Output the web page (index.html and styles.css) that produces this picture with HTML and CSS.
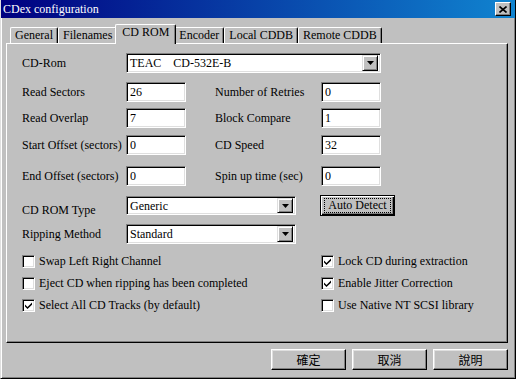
FILE: index.html
```html
<!DOCTYPE html>
<html lang="en">
<head>
    <meta charset="UTF-8">
    <title>CDex configuration</title>
    <link rel="stylesheet" href="styles.css">
</head>
<body>
<div class="window">
    <div class="titlebar">
        <span class="title">CDex configuration</span>
        <span class="close">
            <svg width="8" height="7" viewBox="0 0 8 7"><path d="M0.5 0.5 L7.5 6.5 M7.5 0.5 L0.5 6.5" stroke="#000" stroke-width="1.6"/></svg>
        </span>
    </div>

    <div class="content">
        <!-- tab strip -->
        <div class="tabs">
            <div class="tab">General</div>
            <div class="tab">Filenames</div>
            <div class="tab active">CD ROM</div>
            <div class="tab">Encoder</div>
            <div class="tab">Local CDDB</div>
            <div class="tab">Remote CDDB</div>
        </div>

        <div class="panel">
            <div class="form">
                <div class="label">CD-Rom</div>
                <div class="combo wide">
                    <span class="value">TEAC&nbsp;&nbsp;&nbsp;&nbsp;CD-532E-B</span>
                    <span class="arrow"><svg width="7" height="4" viewBox="0 0 7 4"><path d="M0 0 H7 L3.5 4Z" fill="#000"/></svg></span>
                </div>

                <div class="label">Read Sectors</div>
                <div class="field">26</div>
                <div></div>
                <div class="label">Number of Retries</div>
                <div class="field">0</div>

                <div class="label">Read Overlap</div>
                <div class="field">7</div>
                <div></div>
                <div class="label">Block Compare</div>
                <div class="field">1</div>

                <div class="label">Start Offset (sectors)</div>
                <div class="field">0</div>
                <div></div>
                <div class="label">CD Speed</div>
                <div class="field">32</div>

                <div class="label">End Offset (sectors)</div>
                <div class="field">0</div>
                <div></div>
                <div class="label">Spin up time (sec)</div>
                <div class="field">0</div>
            </div>

            <div class="types">
                <div class="label low">CD ROM Type</div>
                <div class="combo short">
                    <span class="value">Generic</span>
                    <span class="arrow"><svg width="7" height="4" viewBox="0 0 7 4"><path d="M0 0 H7 L3.5 4Z" fill="#000"/></svg></span>
                </div>
                <div></div>
                <div class="btn default"><span class="focus">Auto Detect</span></div>

                <div class="label">Ripping Method</div>
                <div class="combo">
                    <span class="value">Standard</span>
                    <span class="arrow"><svg width="7" height="4" viewBox="0 0 7 4"><path d="M0 0 H7 L3.5 4Z" fill="#000"/></svg></span>
                </div>
            </div>

            <div class="checks">
                <label class="check"><span class="box"></span>Swap Left Right Channel</label>
                <label class="check"><span class="box"></span>Eject CD when ripping has been completed</label>
                <label class="check"><span class="box on"><svg width="7" height="7" viewBox="0 0 7 7"><path d="M0 2.5 L2.5 5 L7 0.5 V2.8 L2.5 7 L0 4.5Z" fill="#000"/></svg></span>Select All CD Tracks (by default)</label>
                <label class="check"><span class="box on"><svg width="7" height="7" viewBox="0 0 7 7"><path d="M0 2.5 L2.5 5 L7 0.5 V2.8 L2.5 7 L0 4.5Z" fill="#000"/></svg></span>Lock CD during extraction</label>
                <label class="check"><span class="box on"><svg width="7" height="7" viewBox="0 0 7 7"><path d="M0 2.5 L2.5 5 L7 0.5 V2.8 L2.5 7 L0 4.5Z" fill="#000"/></svg></span>Enable Jitter Correction</label>
                <label class="check"><span class="box"></span>Use Native NT SCSI library</label>
            </div>
        </div>

        <!-- dialog buttons -->
        <div class="footer">
            <div class="btn cjk">確定</div>
            <div class="btn cjk">取消</div>
            <div class="btn cjk">說明</div>
        </div>
    </div>
</div>
</body>
</html>
```

FILE: styles.css
```css
body {
    margin: 0;
    background: #c0c0c0;
    font-family: "Liberation Serif", serif;
    font-size: 12px;
    color: #000;
}

.window {
    width: 516px;
    height: 379px;
    box-sizing: border-box;
    background: #c0c0c0;
    border-left: 1px solid #dfdfdf;
    border-right: 1px solid #000;
    border-bottom: 1px solid #000;
    box-shadow: inset 1px 0 #fff, inset -1px -1px #808080;
}

/* title bar */
.titlebar {
    height: 18px;
    display: flex;
    align-items: center;
    justify-content: space-between;
    padding: 0 4px 0 2px;
    background: linear-gradient(to right, #000080, #1084d0);
    color: #fff;
}

.close {
    width: 16px;
    height: 14px;
    box-sizing: border-box;
    display: flex;
    align-items: center;
    justify-content: center;
    background: #c0c0c0;
    border: 1px solid;
    border-color: #fff #000 #000 #fff;
    box-shadow: inset -1px -1px #808080;
}

.content {
    padding: 6px 7px 0 5px;
}

/* tabs */
.tabs {
    display: flex;
    align-items: flex-end;
    height: 19px;
    padding-left: 4px;
    position: relative;
    z-index: 1;
}

.tab {
    height: 16px;
    box-sizing: border-box;
    padding: 0 4px;
    line-height: 15px;
    border: 1px solid #fff;
    border-right-color: #000;
    border-bottom: none;
    border-radius: 2px 2px 0 0;
    box-shadow: inset -1px 0 #808080;
    background: #c0c0c0;
}

.tab.active {
    height: 20px;
    margin: 0 -2px -1px;
    padding: 0 6px;
    line-height: 15px;
    position: relative;
    z-index: 1;
}

/* main panel */
.panel {
    height: 300px;
    box-sizing: border-box;
    border: 1px solid;
    border-color: #fff #000 #000 #fff;
    box-shadow: inset -1px -1px #808080;
    padding: 9px 15px 0;
}

.form {
    display: grid;
    grid-template-columns: 104px 60px 29px 106px 60px;
    grid-template-rows: 29px 26px 27px 31px 20px;
    align-items: start;
}

.label {
    line-height: 20px;
    white-space: nowrap;
}

.label.low {
    padding-top: 4px;
}

.field,
.combo {
    height: 20px;
    box-sizing: border-box;
    background: #fff;
    border: 1px solid;
    border-color: #808080 #fff #fff #808080;
    box-shadow: inset 1px 1px #000, inset -1px -1px #dfdfdf;
    padding: 0 3px;
    line-height: 18px;
}

.combo {
    display: flex;
    align-items: center;
    justify-content: space-between;
    padding: 0 2px 0 3px;
}

.combo.wide {
    grid-column: 2 / 6;
}

.combo.short {
    height: 19px;
}

.arrow {
    width: 16px;
    height: 16px;
    box-sizing: border-box;
    display: flex;
    align-items: center;
    justify-content: center;
    background: #c0c0c0;
    border: 1px solid;
    border-color: #dfdfdf #000 #000 #dfdfdf;
    box-shadow: inset 1px 1px #fff, inset -1px -1px #808080;
}

.combo.short .arrow {
    height: 15px;
}

.types {
    display: grid;
    grid-template-columns: 104px 170px 24px 75px;
    grid-template-rows: 28px 20px;
    align-items: start;
    margin-top: 10px;
}

/* buttons */
.btn {
    height: 21px;
    box-sizing: border-box;
    display: flex;
    align-items: center;
    justify-content: center;
    background: #c0c0c0;
    border: 1px solid;
    border-color: #fff #000 #000 #fff;
    box-shadow: inset -1px -1px #808080, inset 1px 1px #dfdfdf;
}

.btn.default {
    border: 1px solid #000;
    box-shadow: inset 1px 1px #fff, inset -1px -1px #000, inset -2px -2px #808080;
    margin-top: -1px;
}

.focus {
    outline: 1px dotted #000;
    padding: 0 3px;
    line-height: 13px;
}

.btn.cjk {
    width: 75px;
    font-family: "Noto Sans CJK TC", sans-serif;
    font-size: 12px;
}

/* check boxes */
.checks {
    display: grid;
    grid-template-columns: 299px auto;
    grid-template-rows: repeat(3, 22px);
    grid-auto-flow: column;
    margin-top: 6px;
}

.check {
    display: flex;
    align-items: center;
    gap: 4px;
    white-space: nowrap;
}

.box {
    width: 13px;
    height: 13px;
    box-sizing: border-box;
    display: flex;
    align-items: center;
    justify-content: center;
    background: #fff;
    border: 1px solid;
    border-color: #808080 #fff #fff #808080;
    box-shadow: inset 1px 1px #000, inset -1px -1px #dfdfdf;
}

.footer {
    display: flex;
    justify-content: flex-end;
    gap: 6px;
    margin-top: 6px;
}
```
